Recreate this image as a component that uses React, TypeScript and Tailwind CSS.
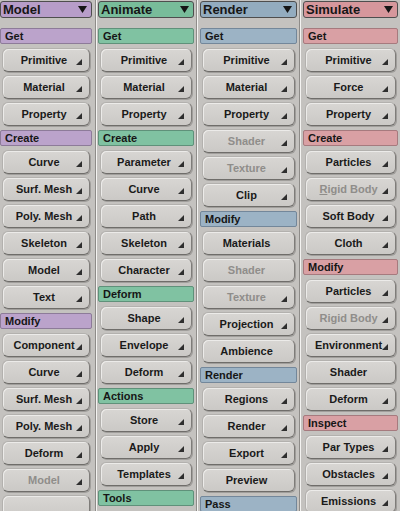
import React from "react";

type Item =
  | { kind: "head"; label: string }
  | { kind: "btn"; label: React.ReactNode; arrow?: boolean; off?: boolean };

type Column = {
  title: string;
  width: string;
  pad: string;
  titleBg: string;
  headBg: string;
  headBorder: string;
  items: Item[];
};

const h = (label: string): Item => ({ kind: "head", label });
const b = (label: React.ReactNode, arrow = true, off = false): Item => ({ kind: "btn", label, arrow, off });

const columns: Column[] = [
  {
    title: "Model",
    width: "w-[95px]",
    pad: "pr-[3px]",
    titleBg: "bg-[#b79dc9]",
    headBg: "bg-[#bba3cb]",
    headBorder: "border-[#8d7b99]",
    items: [
      h("Get"), b("Primitive"), b("Material"), b("Property"),
      h("Create"), b("Curve"), b("Surf. Mesh"), b("Poly. Mesh"), b("Skeleton"), b("Model"), b("Text"),
      h("Modify"), b("Component"), b("Curve"), b("Surf. Mesh"), b("Poly. Mesh"), b("Deform"), b("Model", true, true),
      b("", false),
    ],
  },
  {
    title: "Animate",
    width: "w-[98px]",
    pad: "pr-[2px]",
    titleBg: "bg-[#78bc9a]",
    headBg: "bg-[#80c2a2]",
    headBorder: "border-[#5f917a]",
    items: [
      h("Get"), b("Primitive"), b("Material"), b("Property"),
      h("Create"), b("Parameter"), b("Curve"), b("Path"), b("Skeleton"), b("Character"),
      h("Deform"), b("Shape"), b("Envelope"), b("Deform"),
      h("Actions"), b("Store"), b("Apply"), b("Templates"),
      h("Tools"),
    ],
  },
  {
    title: "Render",
    width: "w-[100px]",
    pad: "pl-[1px] pr-[2px]",
    titleBg: "bg-[#93acbf]",
    headBg: "bg-[#9cb3c5]",
    headBorder: "border-[#73879a]",
    items: [
      h("Get"), b("Primitive"), b("Material"), b("Property"), b("Shader", true, true), b("Texture", true, true), b("Clip"),
      h("Modify"), b("Materials", false), b("Shader", false, true), b("Texture", true, true), b("Projection"), b("Ambience", false),
      h("Render"), b("Regions"), b("Render"), b("Export"), b("Preview", false),
      h("Pass"),
    ],
  },
  {
    title: "Simulate",
    width: "w-[98px]",
    pad: "pl-[1px] pr-[2px]",
    titleBg: "bg-[#d6979c]",
    headBg: "bg-[#d9a0a4]",
    headBorder: "border-[#a67a7e]",
    items: [
      h("Get"), b("Primitive"), b("Force"), b("Property"),
      h("Create"), b("Particles"), b(<><span className="underline">R</span>igid Body</>, true, true), b("Soft Body"), b("Cloth"),
      h("Modify"), b("Particles"), b("Rigid Body", true, true), b("Environment"), b("Shader", false), b("Deform"),
      h("Inspect"), b("Par Types"), b("Obstacles"), b("Emissions"),
    ],
  },
];

function Arrow() {
  return (
    <svg width="6" height="6" viewBox="0 0 6 6" className="absolute right-[7px] bottom-[6px]">
      <polygon points="6,0 6,6 0,6" fill="#2e2e2e" />
    </svg>
  );
}

function Separator() {
  return (
    <div className="flex w-[3px] shrink-0">
      <div className="w-px bg-[#8e8c89]" />
      <div className="w-px bg-[#f4f3f1]" />
      <div className="w-px bg-[#c4c2bf]" />
    </div>
  );
}

function ToolColumn({ col }: { col: Column }) {
  return (
    <div className={`${col.width} ${col.pad} shrink-0 flex flex-col overflow-hidden`}>
      <div
        className={`mt-px h-[17px] shrink-0 ${col.titleBg} border border-[#4e4e4e] rounded-[3px] flex items-center justify-between pl-[2px] pr-[4px] text-[13px] font-bold text-[#161616] leading-none`}
      >
        <span>{col.title}</span>
        <svg width="9" height="7" viewBox="0 0 9 7">
          <polygon points="0,0 9,0 4.5,7" fill="#151515" />
        </svg>
      </div>
      <div className="h-[9px] shrink-0" />
      {col.items.map((it, i) =>
        it.kind === "head" ? (
          <div
            key={i}
            className={`mt-[1px] mb-[4px] h-[16px] shrink-0 ${col.headBg} border ${col.headBorder} rounded-[2px] flex items-center pl-[4px] text-[11px] font-bold text-[#161616] leading-none`}
          >
            {it.label}
          </div>
        ) : (
          <div
            key={i}
            className="relative mx-[2px] mb-[3px] h-[24px] shrink-0 rounded-[6px] border border-[#b3b1ae] border-r-[#7e7c79] border-b-[#6f6d6a] bg-gradient-to-b from-[#d8d6d3] to-[#cbc9c6] shadow-[inset_1px_1px_0_#ecebe9,1px_1px_0_#a09e9b] flex items-center justify-center pr-[4px]"
          >
            <span
              className={`text-[11px] font-bold leading-none whitespace-nowrap ${it.off ? "text-[#8f8d8a]" : "text-[#1a1a1a]"}`}
            >
              {it.label}
            </span>
            {it.arrow && <Arrow />}
          </div>
        )
      )}
    </div>
  );
}

export default function App() {
  return (
    <div
      className="w-[400px] h-[511px] overflow-hidden bg-[#c4c2bf] flex"
      style={{ fontFamily: '"Liberation Sans", Arial, sans-serif' }}
    >
      <ToolColumn col={columns[0]} />
      <Separator />
      <ToolColumn col={columns[1]} />
      <Separator />
      <ToolColumn col={columns[2]} />
      <Separator />
      <ToolColumn col={columns[3]} />
    </div>
  );
}
